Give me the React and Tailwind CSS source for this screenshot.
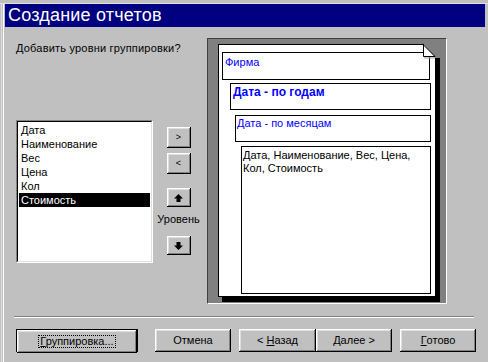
import React from "react";

const raised =
  "bg-[#c0c0c0] shadow-[inset_-1px_-1px_0_#000,inset_1px_1px_0_#fff,inset_-2px_-2px_0_#808080,inset_2px_2px_0_#dfdfdf]";

const fields = ["Дата", "Наименование", "Вес", "Цена", "Кол", "Стоимость"];

const SmallButton = ({ className = "", children }) => (
  <div className={`w-[24px] flex items-center justify-center ${raised} ${className}`}>
    {children}
  </div>
);

const Arrow = ({ down }) => (
  <svg width="9" height="8" viewBox="0 0 9 8" className={down ? "rotate-180" : ""}>
    <path d="M4.5 0 L9 4.5 L6.5 4.5 L6.5 8 L2.5 8 L2.5 4.5 L0 4.5 Z" fill="#000" />
  </svg>
);

const WizButton = ({ className = "", children }) => (
  <div className={`h-[23px] flex items-center justify-center text-[11px] ${raised} ${className}`}>
    {children}
  </div>
);

export default function App() {
  return (
    <div className="w-[488px] h-[362px] bg-[#c0c0c0] overflow-hidden font-['Liberation_Sans',Arial,sans-serif] text-[11px] text-black leading-[13px]">
      <div className="h-[4px] border-b border-[#dfdfdf]" />
      <div className="flex h-[358px]">
        <div className="w-[5px] flex">
          <div className="w-[1px] ml-[1px] bg-[#dfdfdf]" />
          <div className="w-[1px] ml-[1px] bg-white" />
        </div>
        <div className="w-[480px]">
          <div className="h-[23px] bg-[#000080] text-white text-[18px] leading-[23px] pl-[3px] tracking-[0.2px]">
            Создание отчетов
          </div>

          <div className="flex pt-[11px]">
            <div className="ml-[11px] w-[137px]">
              <div className="mt-[4px] h-[13px] whitespace-nowrap tracking-[0.2px]">
                Добавить уровни группировки?
              </div>
              <div className="mt-[65px] h-[143px] bg-white border border-t-[#808080] border-l-[#808080] border-r-white border-b-white">
                <div className="h-full border border-t-black border-l-black border-r-[#dfdfdf] border-b-[#dfdfdf] pt-[1px] pl-[1px] pr-[1px]">
                  {fields.map((f, i) => (
                    <div
                      key={f}
                      className={`h-[14px] leading-[14px] pl-[2px] ${
                        i === fields.length - 1 ? "bg-black text-white" : ""
                      }`}
                    >
                      {f}
                    </div>
                  ))}
                </div>
              </div>
            </div>

            <div className="ml-[2px] w-[47px] flex flex-col items-center">
              <SmallButton className="mt-[89px] h-[21px] text-[9px]">&gt;</SmallButton>
              <SmallButton className="mt-[5px] h-[21px] text-[9px]">&lt;</SmallButton>
              <SmallButton className="mt-[14px] h-[19px]">
                <Arrow />
              </SmallButton>
              <div className="mt-[6px] h-[13px]">Уровень</div>
              <SmallButton className="mt-[10px] h-[19px]">
                <Arrow down />
              </SmallButton>
            </div>

            <div className="ml-[5px] w-[240px] h-[266px] border border-t-[#404040] border-l-[#404040] border-r-white border-b-white bg-[#808080] pt-[5px] pl-[10px]">
              <div className="relative w-[218px] h-[253px] bg-white border border-black shadow-[4px_5px_0_#000]">
                <svg
                  width="18"
                  height="15"
                  viewBox="0 0 18 15"
                  className="absolute top-[-1px] right-[-6px]"
                >
                  <path d="M0 0 L18 0 L18 14 L12 14 Z" fill="#808080" />
                  <path d="M0 0 L0 13 L12 13 Z" fill="#fff" />
                  <path d="M0.5 0 L0.5 12.5 L12 12.5" stroke="#000" fill="none" />
                  <path d="M0 0.5 L12 12.5" stroke="#000" fill="none" />
                  <path d="M1 14 L12 14" stroke="#a0a0a0" />
                </svg>
                <div className="ml-[3px] mt-[7px] w-[208px] h-[28px] border border-black text-[#0000ff] pl-[2px] pt-[3px]">
                  Фирма
                </div>
                <div className="ml-[11px] mt-[3px] w-[201px] h-[27px] border border-black text-[#0000ff] font-bold text-[12px] pl-[2px] pt-[1px] leading-[14px]">
                  Дата - по годам
                </div>
                <div className="ml-[16px] mt-[5px] w-[196px] h-[27px] border border-black text-[#0000ff] pl-[1px] pt-[1px]">
                  Дата - по месяцам
                </div>
                <div className="ml-[22px] mt-[4px] w-[190px] h-[148px] border border-black pl-[1px] pt-[2px] leading-[13px] whitespace-nowrap">
                  Дата, Наименование, Вес, Цена,
                  <br />
                  Кол, Стоимость
                </div>
              </div>
            </div>
          </div>

          <div className="ml-[9px] mt-[12px] w-[460px] border-t border-[#808080] border-b border-b-white" />

          <div className="flex mt-[11px]">
            <div className="ml-[11px] w-[122px] h-[23px] border border-black">
              <WizButton className="h-[21px]">
                <span className="border border-dotted border-black px-[1px] leading-[11px]">
                  <span className="underline">Г</span>руппировка...
                </span>
              </WizButton>
            </div>
            <WizButton className="ml-[17px] w-[76px]">Отмена</WizButton>
            <WizButton className="ml-[8px] w-[77px]">
              &lt; <span className="underline ml-[3px]">Н</span>азад
            </WizButton>
            <WizButton className="w-[76px]">
              <span className="underline">Д</span>алее &gt;
            </WizButton>
            <WizButton className="ml-[8px] w-[76px]">
              <span className="underline">Г</span>отово
            </WizButton>
          </div>
        </div>
      </div>
    </div>
  );
}
